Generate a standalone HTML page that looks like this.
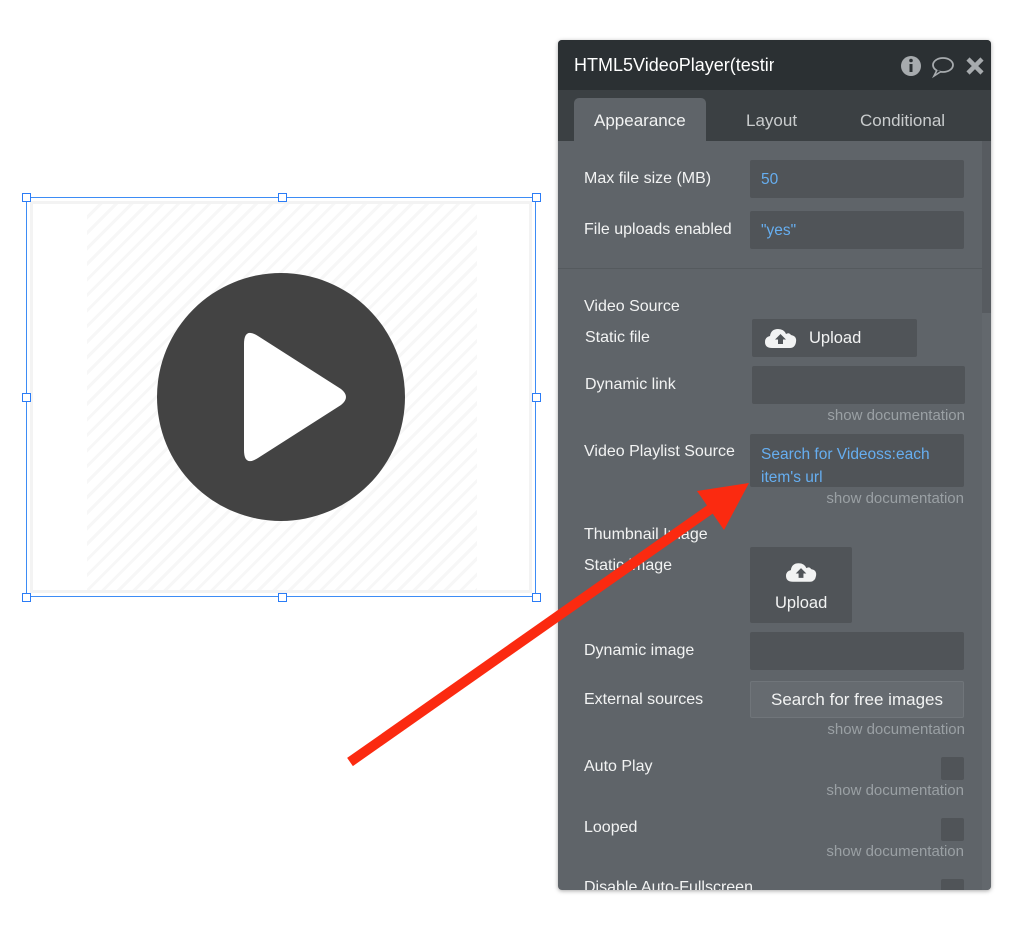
<!DOCTYPE html>
<html><head><style>
body{margin:0;width:1024px;height:930px;background:#fff;position:relative;overflow:hidden;font-family:"Liberation Sans",sans-serif;}
.a{position:absolute}
.panel{left:558px;top:40px;width:433px;height:850px;background:#5f6469;border-radius:4px;overflow:hidden;box-shadow:0 1px 4px rgba(0,0,0,.35)}
.lbl{position:absolute;color:#f2f3f3;font-size:16px;left:26px;margin-top:-1px}
.inp{position:absolute;background:#505458;border-radius:2px}
.blue{color:#66aef0;font-size:15.5px}
.doc{position:absolute;color:#9aa0a4;font-size:15px;right:26px;margin-top:-1px}
.chk{position:absolute;left:383px;width:23px;height:23px;background:#505458;border-radius:2px}
.h{position:absolute;width:7px;height:7px;background:#fff;border:1px solid #2b7cf6}
</style></head><body>
<div class="a" style="left:26px;top:197px;width:510px;height:400px;border:1px solid #3d8cf5;box-sizing:border-box"></div>
<div class="a" style="left:30px;top:201px;width:502px;height:392px;background:#f3f3f3"></div>
<div class="a" style="left:33px;top:204px;width:496px;height:386px;background:#fff"></div>
<div class="a" style="left:87px;top:204px;width:390px;height:386px;background:repeating-linear-gradient(135deg,#fff 0 8px,#f7f7f7 8px 11px)"></div>
<svg class="a" style="left:156px;top:272px" width="250" height="250" viewBox="0 0 250 250">
<circle cx="125" cy="125" r="124" fill="#434343"/>
<path d="M88 72 Q88 55 102 64 L185 117 Q195 125 185 133 L102 186 Q88 195 88 178 Z" fill="#fff"/>
</svg>
<div class="h" style="left:22px;top:193px"></div><div class="h" style="left:278px;top:193px"></div><div class="h" style="left:532px;top:193px"></div>
<div class="h" style="left:22px;top:393px"></div><div class="h" style="left:532px;top:393px"></div>
<div class="h" style="left:22px;top:593px"></div><div class="h" style="left:278px;top:593px"></div><div class="h" style="left:532px;top:593px"></div>

<div class="a panel">
 <div class="a" style="left:0;top:0;width:433px;height:50px;background:#2b3033"></div>
 <div class="a" style="left:16px;top:15px;color:#fff;font-size:18px;width:200px;overflow:hidden;white-space:nowrap">HTML5VideoPlayer(testing)</div>
 <svg class="a" style="left:342px;top:15px" width="90" height="24" viewBox="0 0 90 24">
  <circle cx="11" cy="11" r="10" fill="#a7abae"/><rect x="9.5" y="9" width="3" height="8" fill="#2b3033"/><circle cx="11" cy="5.5" r="1.8" fill="#2b3033"/>
  <ellipse cx="43" cy="10" rx="10" ry="7" fill="none" stroke="#a7abae" stroke-width="1.8"/><path d="M37 15 L34 21 L41 16.5" fill="#2b3033" stroke="#a7abae" stroke-width="1.6"/>
  <path d="M68 4 L82 18 M82 4 L68 18" stroke="#a7abae" stroke-width="4.5"/>
 </svg>
 <div class="a" style="left:0;top:50px;width:433px;height:51px;background:#3b4043"></div>
 <div class="a" style="left:16px;top:58px;width:132px;height:43px;background:#5f6469;border-radius:5px 5px 0 0"></div>
 <div class="a" style="left:36px;top:71px;color:#f2f3f3;font-size:17px">Appearance</div>
 <div class="a" style="left:188px;top:71px;color:#c9cccd;font-size:17px">Layout</div>
 <div class="a" style="left:302px;top:71px;color:#c9cccd;font-size:17px">Conditional</div>
 <div class="a" style="left:424px;top:101px;width:9px;height:749px;background:#63686d"></div>
 <div class="a" style="left:424px;top:101px;width:9px;height:172px;background:#575b60"></div>

 <div class="lbl" style="top:131px">Max file size (MB)</div>
 <div class="inp" style="left:192px;top:120px;width:214px;height:38px"><span class="blue a" style="left:11px;top:11px">50</span></div>
 <div class="lbl" style="top:182px">File uploads enabled</div>
 <div class="inp" style="left:192px;top:171px;width:214px;height:38px"><span class="blue a" style="left:11px;top:11px">"yes"</span></div>
 <div class="a" style="left:0;top:228px;width:424px;height:1px;background:#555a5e"></div>

 <div class="lbl" style="top:259px">Video Source</div>
 <div class="lbl" style="top:290px;left:27px">Static file</div>
 <div class="inp" style="left:194px;top:279px;width:165px;height:38px">
  <svg class="a" style="left:13px;top:8px" width="32" height="22" viewBox="0 0 32 22"><path d="M7 21 Q0 21 0 15 Q0 10 5 9 Q6 2 13 2 Q19 2 21 7 Q24 5 26 8 Q32 9 31 15 Q30 21 25 21 Z" fill="#f2f3f3"/><path d="M15.5 7 L21 12.5 H18 V17 H13 V12.5 H10 Z" fill="#505458"/></svg>
  <span class="a" style="left:57px;top:10px;color:#f2f3f3;font-size:16.5px">Upload</span></div>
 <div class="lbl" style="top:337px;left:27px">Dynamic link</div>
 <div class="inp" style="left:194px;top:326px;width:213px;height:38px"></div>
 <div class="doc" style="top:368px">show documentation</div>
 <div class="lbl" style="top:404px">Video Playlist Source</div>
 <div class="inp" style="left:192px;top:394px;width:214px;height:53px"><div class="blue a" style="left:11px;top:9px;width:200px;line-height:23px">Search for Videoss:each item's url</div></div>
 <div class="doc" style="top:451px;right:27px">show documentation</div>
 <div class="lbl" style="top:487px">Thumbnail Image</div>
 <div class="lbl" style="top:518px">Static image</div>
 <div class="inp" style="left:192px;top:507px;width:102px;height:76px">
  <svg class="a" style="left:36px;top:14px" width="31" height="22" viewBox="0 0 32 22"><path d="M7 21 Q0 21 0 15 Q0 10 5 9 Q6 2 13 2 Q19 2 21 7 Q24 5 26 8 Q32 9 31 15 Q30 21 25 21 Z" fill="#f2f3f3"/><path d="M15.5 7 L21 12.5 H18 V17 H13 V12.5 H10 Z" fill="#505458"/></svg>
  <span class="a" style="left:25px;top:47px;color:#f2f3f3;font-size:16.5px">Upload</span></div>
 <div class="lbl" style="top:603px">Dynamic image</div>
 <div class="inp" style="left:192px;top:592px;width:214px;height:38px"></div>
 <div class="lbl" style="top:652px">External sources</div>
 <div class="a" style="left:192px;top:641px;width:214px;height:37px;background:#666b70;border:1px solid #70757a;box-sizing:border-box;border-radius:2px;color:#f2f3f3;font-size:17px;text-align:center;line-height:35px">Search for free images</div>
 <div class="doc" style="top:682px">show documentation</div>
 <div class="lbl" style="top:719px">Auto Play</div>
 <div class="chk" style="top:717px"></div>
 <div class="doc" style="top:743px;right:27px">show documentation</div>
 <div class="lbl" style="top:780px">Looped</div>
 <div class="chk" style="top:778px"></div>
 <div class="doc" style="top:804px;right:27px">show documentation</div>
 <div class="lbl" style="top:840px">Disable Auto-Fullscreen</div>
 <div class="chk" style="top:839px"></div>
</div>
<svg class="a" style="left:0;top:0" width="1024" height="930">
 <line x1="350" y1="762" x2="712" y2="508" stroke="#fb2a10" stroke-width="10"/>
 <path d="M697 491 L749 483 L724 530 Z" fill="#fb2a10"/>
</svg>
</body></html>
